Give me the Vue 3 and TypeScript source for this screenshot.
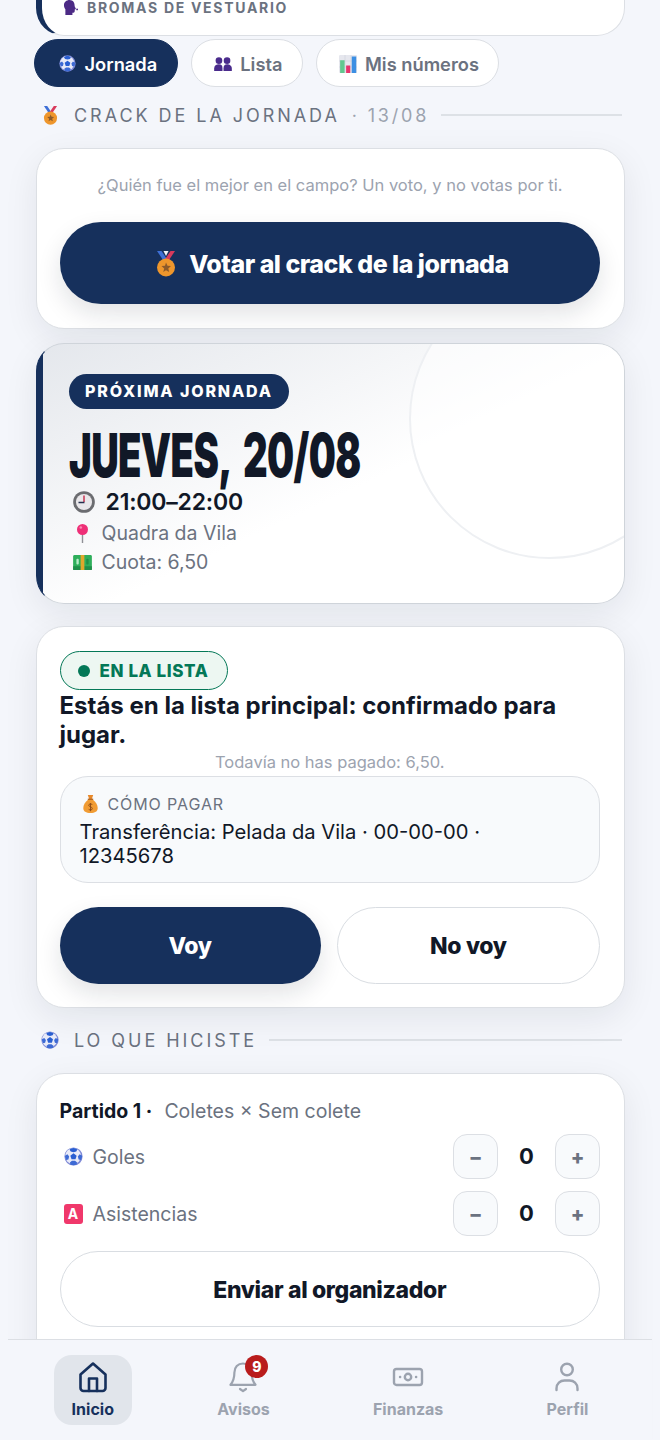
<script setup lang="ts">
interface Stat { icon: string; cls: string; label: string; value: number }
const stats: Stat[] = [
  { icon: 'ball', cls: 'e-ball-19', label: 'Goles', value: 0 },
  { icon: 'a', cls: '', label: 'Asistencias', value: 0 },
]
const tabs = [
  { icon: 'ball', w: 17, h: 17, label: 'Jornada', active: true },
  { icon: 'people', w: 18, h: 14, label: 'Lista', active: false },
  { icon: 'chart', w: 18, h: 18, label: 'Mis números', active: false },
]
</script>

<template>
  <div class="page">
    <svg class="sprite" width="0" height="0" aria-hidden="true">
      <symbol id="ball" viewBox="0 0 24 24">
        <circle cx="12" cy="12" r="11.500" fill="#7f8ad6" />
        <circle cx="11.500" cy="11.500" r="10" fill="#e9ebf8" />
        <path d="M12 8l4 3-1.500 4.500h-5L8 11z" fill="#2a5fd2" />
        <path d="M12 1.200c-2 .2-3.800 1-5 2l1.500 2.500 3.500.8 3.500-.8 1.300-2.500c-1.300-1-2.900-1.800-4.800-2z" fill="#2a5fd2" />
        <path d="M1.200 11c0 2 .5 3.700 1.500 5.300l2.800-.6 1-3.700-2.200-2.800z" fill="#3d6ad4" />
        <path d="M22.800 11c0 2-.5 3.700-1.500 5.300l-2.800-.6-1-3.700 2.200-2.800z" fill="#3d6ad4" />
        <path d="M8 22.200c2.500 1 5.500 1 8 0l.5-2.700-2.500-2h-4l-2.500 2z" fill="#3d6ad4" />
      </symbol>
      <symbol id="people" viewBox="0 0 24 19">
        <g fill="#4a2b8c">
          <circle cx="6.500" cy="5" r="4.500" />
          <circle cx="17.500" cy="5" r="4.500" />
          <path d="M0 19v-3.500C0 12 3 10 6.500 10S11.300 12 11.300 15.500V19z" />
          <path d="M12.700 19v-3.500c0-3.500 1.800-5.500 4.800-5.500s6.500 2 6.500 5.500V19z" />
        </g>
      </symbol>
      <symbol id="chart" viewBox="0 0 24 24">
        <rect width="24" height="24" rx="1.500" fill="#e6e7ee" />
        <path d="M8 0v24M16 0v24M0 8h24M0 16h24" stroke="#cfd1da" stroke-width=".8" />
        <rect x="1.500" y="7" width="6" height="17" fill="#62c78f" />
        <rect x="9.500" y="14" width="5.500" height="10" fill="#e8346d" />
        <rect x="17" y="2" width="6" height="22" fill="#3c8fe3" />
      </symbol>
      <symbol id="medal" viewBox="0 0 20 26">
        <path d="M1 0h4.500l6 9H7z" fill="#3e6fd6" />
        <path d="M19 0h-4.500l-6 9H13z" fill="#d83a5c" />
        <path d="M7.500 0h5L10 5z" fill="#f2f2f6" />
        <circle cx="10" cy="16.500" r="9" fill="#ee962c" />
        <path d="M10 11.500l1.500 3.300 3.500.3-2.700 2.300.9 3.500L10 19.200l-2.700 1.700.9-3.500-2.700-2.300 3.500-.3z" fill="#8d5a2a" />
      </symbol>
      <symbol id="clock" viewBox="0 0 24 24">
        <circle cx="12" cy="12" r="11.800" fill="#6b6c70" />
        <circle cx="12" cy="12" r="8.800" fill="#e9e7ea" />
        <path d="M12 12V5" stroke="#c9314f" stroke-width="1.600" />
        <path d="M12.500 12.500H6" stroke="#26304f" stroke-width="1.800" />
      </symbol>
      <symbol id="pin" viewBox="0 0 11 19">
        <rect x="4.800" y="8" width="1.400" height="11" fill="#8f9096" />
        <circle cx="5.500" cy="5.500" r="5.500" fill="#ee2f77" />
        <circle cx="3.800" cy="3.500" r="1.300" fill="#f98ab2" />
      </symbol>
      <symbol id="money" viewBox="0 0 20 16">
        <rect width="20" height="16" rx="1.500" fill="#2eae5b" />
        <rect y="12" width="20" height="4" fill="#1f8f4a" />
        <rect x="8" width="4" height="16" fill="#e0a72c" />
        <rect x="3.500" y="4" width="2.500" height="6" rx="1" fill="#b9ecc9" />
        <rect x="14" y="4" width="2.500" height="6" rx="1" fill="#1f8f4a" />
      </symbol>
      <symbol id="bag" viewBox="0 0 16 20">
        <path d="M5 0h6l-1.500 4.500h-3z" fill="#e8892b" />
        <path d="M5.500 5h5C14 8 16 11 16 14.500 16 18.500 13 20 8 20S0 18.500 0 14.500C0 11 2 8 5.500 5z" fill="#f19c34" />
        <rect x="5" y="4" width="6" height="1.500" fill="#b5651d" />
        <path d="M10 10.500C8 9.500 6 10 6 11.500s4 1.500 4 3.500-2.500 2-4 1M8 9v9" stroke="#8a4a17" stroke-width="1" fill="none" />
      </symbol>
      <symbol id="head" viewBox="0 0 16 16">
        <path d="M6.500 0C3 0 .5 2.300.5 5.500c0 2 .7 3.200 1.500 4.300V16h7.500v-2.300c1.500 0 2.500-.7 2.500-2v-1.500l1.300-.5-1.400-3C12 3 10.300 0 6.500 0z" fill="#4c2a85" />
        <circle cx="14.500" cy="10" r="1" fill="#4c2a85" />
      </symbol>
    </svg>

    <section class="card top-card">
      <div class="top-label">
        <svg class="e-head"><use href="#head" /></svg>BROMAS DE VESTUARIO
      </div>
    </section>

    <div class="tabs">
      <button v-for="t in tabs" :key="t.label" class="tab" :class="{ active: t.active }">
        <span class="tab-slot"><svg :width="t.w" :height="t.h"><use :href="'#' + t.icon" /></svg></span>{{ t.label }}
      </button>
    </div>

    <div class="section-title first">
      <span class="st-slot"><svg class="e-medal-s"><use href="#medal" /></svg></span>
      <span class="st-text">CRACK DE LA JORNADA</span>
      <span class="st-date">· 13/08</span>
      <span class="st-line"></span>
    </div>

    <section class="card vote-card">
      <p class="vote-hint">¿Quién fue el mejor en el campo? Un voto, y no votas por ti.</p>
      <button class="btn primary vote-btn">
        <svg class="e-medal-l"><use href="#medal" /></svg>Votar al crack de la jornada
      </button>
    </section>

    <section class="card next-card">
      <div class="circle"></div>
      <div class="pill">PRÓXIMA JORNADA</div>
      <h1 class="date">JUEVES, 20/08</h1>
      <div class="time"><svg class="e-clock"><use href="#clock" /></svg>21:00–22:00</div>
      <div class="meta first-meta"><span class="slot"><svg class="e-pin"><use href="#pin" /></svg></span>Quadra da Vila</div>
      <div class="meta"><span class="slot"><svg class="e-money"><use href="#money" /></svg></span>Cuota: 6,50</div>
    </section>

    <section class="card status-card">
      <div class="badge"><span class="dot"></span>EN LA LISTA</div>
      <h2 class="status-title">Estás en la lista principal: confirmado para jugar.</h2>
      <p class="note">Todavía no has pagado: 6,50.</p>
      <div class="pay">
        <div class="pay-label"><svg class="e-bag"><use href="#bag" /></svg>CÓMO PAGAR</div>
        <div class="pay-text">Transferência: Pelada da Vila · 00-00-00 · 12345678</div>
      </div>
      <div class="actions">
        <button class="btn primary action">Voy</button>
        <button class="btn outline action">No voy</button>
      </div>
    </section>

    <div class="section-title second">
      <span class="st-slot"><svg class="e-ball-18"><use href="#ball" /></svg></span>
      <span class="st-text">LO QUE HICISTE</span>
      <span class="st-line"></span>
    </div>

    <section class="card stats-card">
      <div class="match"><strong>Partido 1 ·</strong><span>Coletes × Sem colete</span></div>
      <div v-for="s in stats" :key="s.label" class="stat-row">
        <span class="slot">
          <svg v-if="s.icon === 'ball'" :class="s.cls"><use href="#ball" /></svg>
          <span v-else class="e-a">A</span>
        </span>
        <span class="stat-label">{{ s.label }}</span>
        <button class="step">−</button>
        <span class="stat-value">{{ s.value }}</span>
        <button class="step">+</button>
      </div>
      <button class="btn outline send">Enviar al organizador</button>
    </section>

    <nav class="nav">
      <div class="nav-item current">
        <svg class="nav-icon" viewBox="0 0 32 32" fill="none" stroke="currentColor" stroke-width="2.6" stroke-linejoin="round" stroke-linecap="round">
          <path d="M3.500 13.500 16 2.500l12.500 11V27a3 3 0 0 1-3 3h-19a3 3 0 0 1-3-3z" />
          <path d="M12 30V17.500h8V30" />
        </svg>
        <span>Inicio</span>
      </div>
      <div class="nav-item">
        <span class="bell-wrap">
          <svg class="nav-icon" viewBox="0 0 32 32" fill="none" stroke="currentColor" stroke-width="2.200" stroke-linejoin="round" stroke-linecap="round">
            <path d="M16 2.500c-5.200 0-8.600 3.800-8.600 9 0 6.300-1 8.800-3.900 12.300h25c-2.900-3.500-3.900-6-3.900-12.300 0-5.200-3.400-9-8.600-9z" />
            <path d="M13 28l3 2.200 3-2.200" />
          </svg>
          <span class="count">9</span>
        </span>
        <span>Avisos</span>
      </div>
      <div class="nav-item">
        <svg class="nav-icon" viewBox="0 0 32 32" fill="none" stroke="currentColor" stroke-width="2.400" stroke-linejoin="round" stroke-linecap="round">
          <rect x="2" y="8" width="28" height="16" rx="2.500" />
          <circle cx="16" cy="16" r="3.200" />
          <path d="M8 16h.2M24 16h.2" />
        </svg>
        <span>Finanzas</span>
      </div>
      <div class="nav-item">
        <svg class="nav-icon" viewBox="0 0 32 32" fill="none" stroke="currentColor" stroke-width="2.400" stroke-linecap="round">
          <circle cx="16" cy="8.500" r="5.800" />
          <path d="M5.500 29v-1.500c0-5 3.700-8 8-8h5c4.300 0 8 3 8 8V29" />
        </svg>
        <span>Perfil</span>
      </div>
    </nav>
  </div>
</template>

<style>
html, body { margin: 0; background: #f4f6fb; }
</style>

<style scoped>
* { box-sizing: border-box; }
.sprite { position: absolute; }
svg { display: block; flex: none; }
.page {
  position: relative;
  width: 660px;
  height: 1440px;
  overflow: hidden;
  padding: 0 35.500px;
  background: #f4f6fb;
  font-family: Inter, "Noto Sans", sans-serif;
  color: #111827;
}
.card {
  position: relative;
  background: #fff;
  border: 1.500px solid #dcdfe4;
  border-radius: 28px;
  box-shadow: 0 10px 34px rgba(17, 24, 39, 0.08);
}
.top-card {
  height: 76px;
  margin-top: -40px;
  border-left: 6px solid #16305c;
  padding: 36px 0 0 21.500px;
  box-shadow: none;
}
.top-label {
  display: flex;
  align-items: center;
  font-size: 14px;
  font-weight: 700;
  letter-spacing: 1.700px;
  color: #6b7280;
  height: 18px;
  margin-top: 1px;
}
.e-head { width: 16px; height: 15px; margin-right: 8px; }
.tabs { display: flex; gap: 13px; margin: 3px 0 0 -1.500px; }
.tab {
  height: 48px;
  display: flex;
  align-items: center;
  padding: 1px 19.500px 0 22px;
  border: 1.500px solid #dcdfe4;
  border-radius: 25px;
  background: #fff;
  font: 600 18.300px Inter, sans-serif;
  color: #6b7280;
}
.tab.active { background: #16305c; border-color: #16305c; color: #fff; padding: 1px 20px 0 23.500px; }
.tab-slot { display: flex; justify-content: center; width: 18px; margin-right: 8px; }
.section-title { display: flex; align-items: center; height: 24px; padding-left: 6.500px; }
.section-title.first { margin-top: 16px; }
.section-title.second { margin-top: 20px; }
.st-slot { display: flex; justify-content: center; width: 16px; margin-right: 16px; flex: none; }
.e-medal-s { width: 15px; height: 19px; }
.e-ball-18 { width: 18px; height: 18px; }
.st-text { font-size: 18px; letter-spacing: 2.950px; color: #6b7280; white-space: nowrap; }
.st-date { font-size: 18px; letter-spacing: 2.800px; color: #9ca3af; margin-left: 12px; white-space: nowrap; }
.st-line { flex: 1; height: 2px; background: #dde1e6; margin: 0 2.500px 0 12px; }
.vote-card { margin-top: 21px; height: 181px; padding: 0 23px 0 23px; }
.vote-hint { margin: 0; padding-top: 26px; text-align: center; font-size: 16.500px; line-height: 20px; color: #9ca3af; }
.btn {
  display: flex;
  align-items: center;
  justify-content: center;
  padding: 2px 0 0;
  font: 800 23px Inter, sans-serif;
  letter-spacing: -0.350px;
  border-radius: 999px;
}
.primary { background: #16305c; color: #fff; border: none; box-shadow: 0 10px 24px rgba(17, 24, 39, 0.12); }
.outline { background: #fff; color: #111827; border: 1.500px solid #d9dde2; }
.vote-btn { width: 540px; height: 82px; margin-top: 27px; padding-left: 5px; font-size: 25px; letter-spacing: -0.500px; }
.e-medal-l { width: 22px; height: 26px; margin-right: 12px; }
.next-card {
  margin-top: 14px;
  height: 261px;
  overflow: hidden;
  border-color: #cfd4da;
  border-left-color: #16305c;
  padding: 30px 0 0 32px;
  background:
    linear-gradient(#16305c, #16305c) left / 6px 100% no-repeat,
    linear-gradient(155deg, #e4e7ec 0%, #fff 55%);
}
.circle {
  position: absolute;
  top: -66px;
  right: -66px;
  width: 281px;
  height: 281px;
  border-radius: 50%;
  border: 2px solid #eef0f3;
  background: rgba(255, 255, 255, 0.55);
}
.pill {
  position: relative;
  display: inline-block;
  height: 35px;
  padding: 0 16.500px;
  border-radius: 18px;
  background: #16305c;
  color: #fff;
  font-size: 16px;
  font-weight: 800;
  letter-spacing: 1.850px;
  line-height: 35px;
}
.date {
  position: relative;
  margin: 24px 0 0;
  height: 44px;
  font-size: 60px;
  line-height: 44px;
  font-weight: 900;
  letter-spacing: -1px;
  word-spacing: 10px;
  color: #111827;
  white-space: nowrap;
  transform: scaleX(0.637);
  transform-origin: left center;
}
.time { position: relative; display: flex; align-items: center; font-size: 23px; letter-spacing: -0.200px; font-weight: 600; line-height: 30px; color: #111827; margin-top: 10px; }
.e-clock { width: 22px; height: 22px; margin: 0 11px 0 4px; }
.meta { position: relative; display: flex; align-items: center; font-size: 19.500px; line-height: 29px; color: #6b7280; }
.first-meta { margin-top: 1.500px; }
.slot { display: flex; align-items: center; justify-content: center; width: 33px; padding: 0 10px 0 4px; }
.e-pin { width: 11px; height: 19px; }
.e-money { width: 19px; height: 15px; }
.status-card { margin-top: 22px; height: 382px; padding: 24px 23.500px 0 23px; }
.badge {
  display: inline-flex;
  align-items: center;
  height: 39px;
  padding: 1px 19px 0 17px;
  border: 1.500px solid #047857;
  border-radius: 20px;
  background: #edf7f2;
  color: #047857;
  font-size: 17px;
  font-weight: 800;
  letter-spacing: 0.600px;
}
.dot { width: 12px; height: 12px; border-radius: 50%; background: #047857; margin-right: 10px; }
.status-title { margin: 0.500px 0 0; font-size: 24px; line-height: 29px; font-weight: 700; }
.note { margin: 1px 0 0; font-size: 16.500px; line-height: 24px; text-align: center; color: #9ca3af; }
.pay {
  height: 107px;
  margin-top: 2px;
  padding: 15px 21px 0 19px;
  border: 1.500px solid #dcdfe4;
  border-radius: 28px;
  background: #f8fafc;
}
.pay-label { display: flex; align-items: center; font-size: 16px; letter-spacing: 0.900px; line-height: 24px; color: #6b7280; }
.e-bag { width: 15px; height: 18px; margin: 0 10px 0 3px; }
.pay-text { font-size: 20.200px; line-height: 24px; margin-top: 4px; color: #111827; }
.actions { display: flex; gap: 16px; margin-top: 24px; }
.action { flex: 1; height: 77px; }
.stats-card { margin-top: 21px; height: 400px; padding: 24px 23.500px 0 23px; }
.match { display: flex; gap: 12px; font-size: 19.500px; line-height: 26px; color: #6b7280; }
.match strong { color: #111827; font-weight: 700; }
.stat-row { display: flex; align-items: center; height: 45px; margin-top: 10px; font-size: 19.500px; color: #6b7280; }
.stat-row + .stat-row { margin-top: 12px; }
.e-ball-19 { width: 19px; height: 19px; }
.e-a {
  display: block;
  width: 19px;
  height: 20px;
  flex: none;
  border-radius: 3px;
  background: #f0386b;
  color: #fff;
  font-size: 14px;
  font-weight: 700;
  line-height: 20px;
  text-align: center;
}
.stat-label { flex: 1; }
.step {
  width: 45px;
  height: 45px;
  border: 1.500px solid #dcdfe4;
  border-radius: 14px;
  background: #f8fafc;
  color: #6b7280;
  font: 800 20px Inter, sans-serif;
  padding: 0;
}
.stat-value { width: 57px; margin-bottom: 2px; text-align: center; font-size: 22px; font-weight: 700; color: #111827; }
.send { width: 100%; height: 76px; margin-top: 15px; }
.nav {
  position: absolute;
  left: 8px;
  right: 8px;
  top: 1339px;
  height: 101px;
  display: flex;
  justify-content: space-around;
  align-items: flex-start;
  padding: 15px 12px 0;
  background: #f4f6fb;
  border-top: 1.500px solid #dcdfe4;
}
.nav-item {
  display: flex;
  flex-direction: column;
  align-items: center;
  height: 70px;
  padding: 6px 18px 0;
  border-radius: 18px;
  font-size: 16px;
  font-weight: 700;
  line-height: 20px;
  color: #9ca3af;
  gap: 6px;
}
.nav-item.current { background: #e1e5eb; color: #16305c; }
.nav-icon { width: 32px; height: 32px; display: block; }
.bell-wrap { position: relative; display: block; }
.count {
  position: absolute;
  top: -6px;
  right: -9px;
  width: 23px;
  height: 23px;
  border-radius: 50%;
  background: #b91c1c;
  color: #fff;
  font-size: 14px;
  font-weight: 800;
  line-height: 23px;
  text-align: center;
}
</style>
